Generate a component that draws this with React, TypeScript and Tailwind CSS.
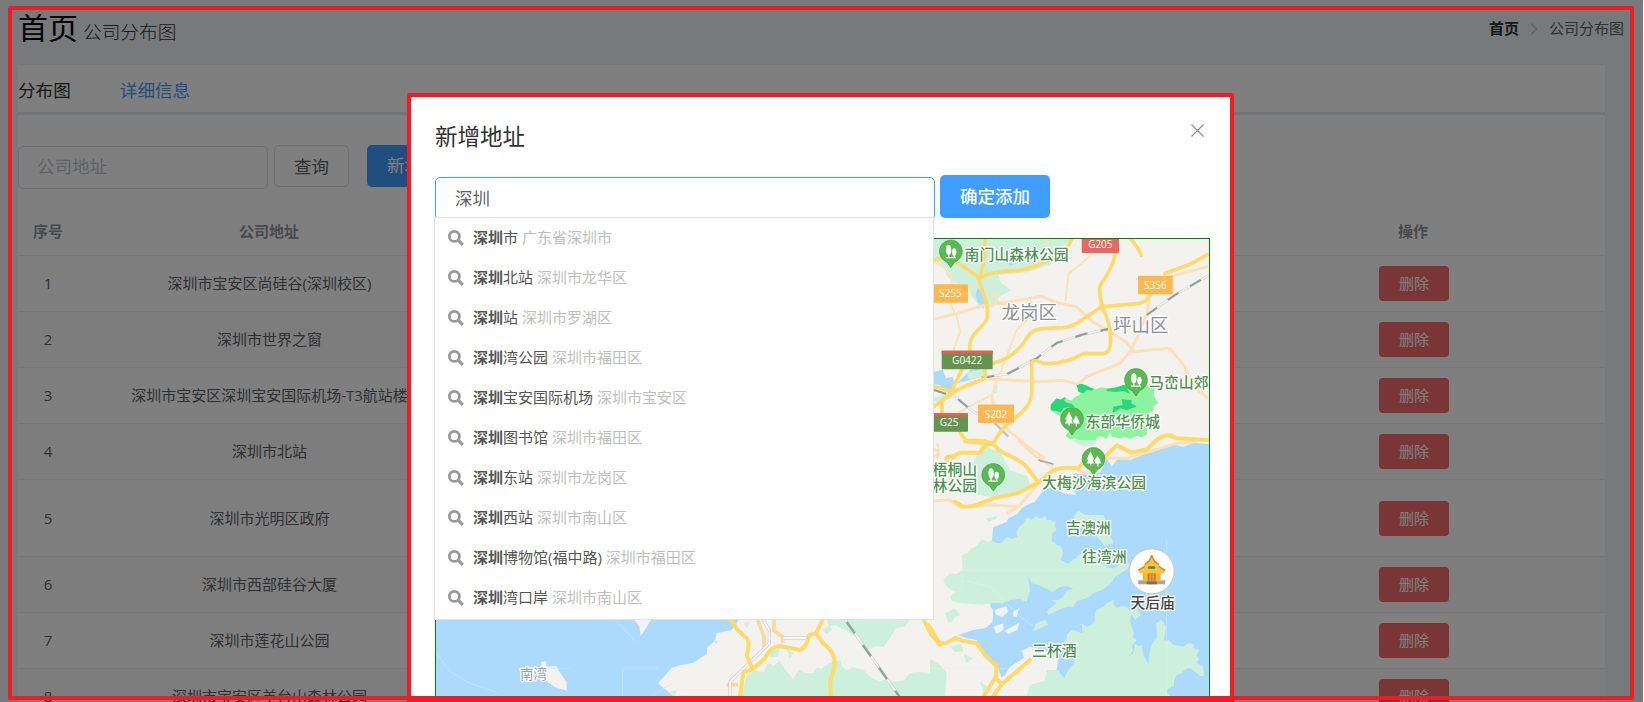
import React from 'react';

const companies = [
  { address: '深圳市宝安区尚硅谷(深圳校区)', tall: false },
  { address: '深圳市世界之窗', tall: false },
  { address: '深圳市宝安区深圳宝安国际机场-T3航站楼', tall: false },
  { address: '深圳市北站', tall: false },
  { address: '深圳市光明区政府', tall: true },
  { address: '深圳市西部硅谷大厦', tall: false },
  { address: '深圳市莲花山公园', tall: false },
  { address: '深圳市宝安区羊台山森林公园', tall: false },
];

const suggestions = [
  ['市', '广东省深圳市'],
  ['北站', '深圳市龙华区'],
  ['站', '深圳市罗湖区'],
  ['湾公园', '深圳市福田区'],
  ['宝安国际机场', '深圳市宝安区'],
  ['图书馆', '深圳市福田区'],
  ['东站', '深圳市龙岗区'],
  ['西站', '深圳市南山区'],
  ['博物馆(福中路)', '深圳市福田区'],
  ['湾口岸', '深圳市南山区'],
];

function SearchIcon() {
  return (
    <svg className="h-4 w-4 shrink-0" viewBox="0 0 16 16" fill="none" stroke="#999">
      <circle cx="6.4" cy="6.4" r="5" strokeWidth="2.8" />
      <path d="M10.2 10.2L14.8 14.8" strokeWidth="3.2" />
    </svg>
  );
}

function Header() {
  return (
    <header className="flex h-[65px] justify-between pl-[18px] pr-[19px]">
      <div className="flex items-baseline gap-[5px] leading-[56px]">
        <h1 className="text-[30px] text-black">首页</h1>
        <span className="text-[18.7px] font-light text-[#303133]">公司分布图</span>
      </div>
      <nav className="flex h-[57px] items-center text-[15px]">
        <span className="font-bold text-[#303133]">首页</span>
        <svg className="mx-[11px] h-3 w-2" viewBox="0 0 8 12" fill="none" stroke="#c0c4cc" strokeWidth="1.2">
          <path d="M1 0.5L6.5 6L1 11.5" />
        </svg>
        <span className="text-[#606266]">公司分布图</span>
      </nav>
    </header>
  );
}

function CompanyTable() {
  return (
    <div className="text-[15px] text-[#606266]">
      <div className="flex h-12 items-center border-b border-[#ebeef5] text-center font-bold text-[#909399]">
        <div className="w-[60px]">序号</div>
        <div className="w-96 pr-[2px]">公司地址</div>
        <div className="flex-1" />
        <div className="w-[382px] pr-[2px]">操作</div>
      </div>
      {companies.map((company, i) => (
        <div
          key={company.address}
          className={
            'flex items-center border-b border-[#ebeef5] text-center ' +
            (company.tall ? 'h-[77px] ' : 'h-14 ') +
            (i % 2 ? 'bg-[#fafafa]' : 'bg-white')
          }
        >
          <div className="w-[60px]">{i + 1}</div>
          <div className="w-96 whitespace-nowrap pr-px">{company.address}</div>
          <div className="flex-1" />
          <div className="flex w-[382px] justify-center">
            <button className="h-[35px] w-[70px] rounded-[4px] bg-[#f56c6c] text-[15px] text-white">删除</button>
          </div>
        </div>
      ))}
    </div>
  );
}

function Page() {
  return (
    <div className="h-full w-[1643px] bg-[#f0f2f5]">
      <Header />
      <main className="ml-[18px] w-[1587px] bg-white">
        <div className="flex h-[50px] items-center gap-[49px] border-b-[3px] border-[#e4e7ed] pt-[3px] text-[17.6px] text-[#303133]">
          <span>分布图</span>
          <span className="text-[#409eff]">详细信息</span>
        </div>
        <div className="flex h-[93px] items-start pt-[30px] text-[17.5px]">
          <div className="mt-px flex h-[43px] w-[250px] items-center rounded-[5px] border border-[#dcdfe6] pb-[2px] pl-[18px] text-[#c0c4cc]">
            公司地址
          </div>
          <button className="ml-[6px] h-[42px] w-[75px] rounded-[5px] border border-[#dcdfe6] text-[#606266]">查询</button>
          <button className="ml-[18px] h-[42px] w-[75px] rounded-[5px] bg-[#409eff] pb-[1px] text-white">新增</button>
        </div>
        <CompanyTable />
      </main>
    </div>
  );
}

function TreePin({ x, y, pointed = false }: { x: number; y: number; pointed?: boolean }) {
  return (
    <g transform={`translate(${x} ${y})`}>
      <path d="M0 15.5L-4 10A11.3 11.3 0 1 1 4 10Z" fill="#5bb954" stroke="#4a9e45" strokeWidth="0.8" />
      {pointed ? (
        <g fill="#fff">
          <path d="M-3-8L-7 0H-5L-7 4H-3.6V6H-2.2V4H1L-0.8 0H0.8Z" />
          <path d="M4-4L1 1L2 4H3.7V7H5V4H8L6.5 1H7Z" />
        </g>
      ) : (
        <g fill="#fff">
          <ellipse cx="-2.2" cy="-2.2" rx="2.7" ry="5" />
          <ellipse cx="3.4" cy="0" rx="2.2" ry="3.8" />
          <path d="M-2.8 0H-1.6V6H-2.8ZM2.8 2H4V6H2.8ZM-5 5H5V6.2H-5Z" />
        </g>
      )}
    </g>
  );
}

function RoadSign({ x, y, w, label, color, top }: { x: number; y: number; w: number; label: string; color: string; top?: boolean }) {
  return (
    <g>
      <rect x={x} y={y} width={w} height="18.5" fill={color} rx="0.8" />
      {top && <rect x={x} y={y} width={w} height="3" fill="#e85c56" />}
      <text x={x + w / 2} y={y + 13} fontSize="10" textAnchor="middle" fill="#fff">{label}</text>
    </g>
  );
}

const greenLabels: [number, number, string][] = [
  [964.5, 259.5, '南门山森林公园'],
  [1149, 387.5, '马峦山郊'],
  [1085.5, 426.5, '东部华侨城'],
  [1042, 488, '大梅沙海滨公园'],
  [932.5, 475, '梧桐山'],
  [932.5, 491, '林公园'],
  [1066, 533, '吉澳洲'],
  [1082, 562, '往湾洲'],
  [1032, 656, '三杯酒'],
];

function MapView() {
  return (
    <svg
      className="block h-[464px] w-[773px]"
      viewBox="436 239 773 464"
      fill="none"
      strokeLinejoin="round"
      fontFamily="'Open Sans', 'Noto Sans CJK SC', sans-serif"
    >
      <rect x="436" y="239" width="773" height="464" fill="#f3f2ee" />

      {/* northern districts */}
      <g transform="translate(930 235) scale(.33333)">
        <path fill="#cdf0dd" d="M12 10H430L408 26L390 40L375 80L350 92L290 112L205 120L212 142L245 166L210 184L190 216L150 216L125 184L112 152L75 145L50 122L42 92L12 82Z" />
        <path fill="#fbe5bb" d="M345 12L360 12L350 50Z" />
        <path fill="#acdafd" d="M238 38L258 58L275 48L292 76L240 92L225 75ZM142 158L158 175L168 200L160 222L145 204L136 184ZM12 410L38 404L48 430L68 425L75 455L45 470L30 450L12 448ZM82 445L120 405L150 400L120 435Z" />
        <path fill="#cdf0dd" d="M110 412L160 402L160 424L120 440ZM190 450L202 448L202 472L193 476ZM12 490L45 475L70 485L40 500L12 498ZM150 645L170 638L210 650L230 700H120Z" />
        <g stroke="#fde0ba" strokeWidth="9">
          <path d="M12 252L80 236L165 210L230 202L335 184L385 204L440 216L485 258L530 285L590 322L610 350L720 340L765 395L780 445L834 490" />
          <path d="M170 180H200L200 202L240 210M170 432L325 440L400 436L445 448L470 425L570 385L600 350L625 300L650 240L660 180M720 125L834 95M185 475L195 540L240 590L300 640L345 670" />
        </g>
        <g stroke="#fbe3b6" strokeWidth="6">
          <path d="M12 80L55 105L70 150L62 210L80 245L90 290L70 347M490 55L415 118L406 200M300 245L260 285L235 350L185 480L85 532M20 625Q35 650 12 665" />
        </g>
        <path stroke="#bcc3c2" strokeWidth="7" d="M120 437L170 425L230 418L320 370L380 324L460 298L535 282M650 240L735 180L834 122M12 465L75 485L130 530L190 560L235 605M330 676L370 690" />
        <path stroke="#f4f4f1" strokeWidth="5" d="M120 437L170 425L230 418L320 370L380 324L460 298L535 282M650 240L735 180L834 122M12 465L75 485L130 530L190 560" />
        <path stroke="#8f9e9b" strokeWidth="6" strokeDasharray="38 40" d="M155 428L230 418L320 370L380 324L460 298L535 282M650 240L735 180L834 122M12 465L75 485L130 530L190 560" />
        <g stroke="#ffd96a" strokeWidth="11" strokeLinecap="round">
          <path d="M12 75Q55 60 85 85L148 128Q166 80 165 12M148 128Q200 104 260 107Q310 100 345 80Q400 70 425 12" />
          <path d="M148 128C145 162 178 190 172 245C168 278 112 290 120 347" />
          <path d="M190 385Q255 368 290 310Q302 282 345 280L400 278Q430 275 460 252L515 215L630 205Q650 200 660 180" />
          <path d="M555 55Q553 90 511 150Q505 170 518 218Q542 265 542 310Q543 356 518 356L460 356Q400 390 340 385Q305 368 305 388L305 480Q300 520 240 560Q205 590 190 628" />
          <path d="M705 115L780 88L834 58M603 12L625 42L634 60M12 455L70 470L165 430L165 405M36 530L35 500L64 470L95 405M12 515L60 478L110 450M90 592L110 620L185 626" />
        </g>
        <path fill="#8cf3a0" d="M362 510L372 500L380 492L392 494L408 486L413 494L425 496L438 484L450 480L452 462L440 452L455 446L470 450L484 458L498 463L514 457L530 460L560 458L585 450L650 450L675 460L671 480L684 505L668 515L672 526L655 535L658 555L650 566L662 575L650 585L652 598L635 607L620 603L600 612L585 606L570 610L545 605L540 592L530 612L515 604L500 608L498 620L490 628L474 626L460 634L448 618L435 610L420 612L406 604L412 594L428 585L420 572L395 560L396 548L378 536L362 528L368 518Z" />
        <path fill="#28d878" d="M362 510L372 498L380 490L392 494L405 486L403 498L412 504L425 506L435 515L418 516L400 520L392 532L378 528L362 525ZM440 450L455 446L475 455L492 462L484 467L472 464L460 475L445 470ZM530 462L560 457L580 450L600 453L610 460L592 463L600 476L580 468L555 471L530 468ZM548 535L550 515L565 512L578 510L575 492L590 494L605 495L604 505L620 515L606 520L590 526L572 520Z" />
      </g>

      {/* coast and islands */}
      <g transform="translate(930 440) scale(.33333)">
        <path fill="#acdafd" d="M834 12L790 8L760 20L720 12L690 28L650 30L630 48L600 60L568 50L545 80L530 55L512 96L490 105L430 100L425 148L440 165L400 160L370 140L340 150L315 185L290 195L275 205L262 222L235 235L230 245L190 262L185 310L200 318L180 500L190 510L187 548L165 565L130 570L85 585L110 595L140 600L165 640L200 670L214 712L225 706L240 680L265 665L300 640L300 622L400 720L700 768H837V10Z" />
        <path fill="#f3f2ee" d="M80 330L200 318L200 480L80 490ZM195 510L228 498L235 515L218 530L198 525ZM250 515L268 505L260 530L250 530ZM190 560L220 550L220 570L200 582ZM225 572L268 548L262 570L235 582ZM275 632L300 620L360 635L385 650L380 690L355 690L325 658L285 660Z" />
        <g fill="#cdf0dd">
          <path d="M40 420L60 400L80 402L98 390L95 345L110 340L125 325L140 318L155 298L175 305L182 300L200 310L215 308L230 292L248 296L262 290L260 275L268 260L282 248L286 236L295 232L305 240L318 228L330 236L345 228L350 240L364 240L378 248L372 256L380 268L366 282L365 305L378 308L380 316L392 318L400 340L392 360L415 372L425 362L440 355L444 345L460 340L472 346L484 340L500 345L506 354L500 360L510 370L525 372L530 382L550 385L572 372L598 370L595 385L555 410L545 428L520 448L490 460L470 475L440 482L430 500L410 500L380 512L355 525L350 515L365 502L380 490L365 480L385 480L400 470L410 454L430 446L410 438L388 442L368 455L325 435L305 430L295 408L300 450L290 485L270 478L240 480L220 490L190 488L160 494L90 490L65 482L62 468L80 455L60 448L45 435Z" />
          <path d="M445 212L465 225L520 225L532 250L545 270L542 284L550 310L538 312L525 320L512 302L500 290L520 270L455 260L430 230ZM345 540L355 555L338 560L325 568L310 572L318 550Z" />
          <path d="M290 768L300 735L345 722L350 690L383 690L402 715L415 690L430 672L440 650L415 650L410 635L390 620L410 596L410 585L425 570L440 574L458 580L455 550L470 560L485 555L496 540L494 522L500 510L520 500L530 490L552 478L550 492L560 505L575 498L590 500L605 520L600 540L605 560L612 580L608 590L620 600L605 620L610 632L595 650L610 640L615 610L625 618L635 615L640 645L655 672L662 620L672 604L682 595L678 550L695 540L708 560L702 602L716 600L730 615L760 620L775 610L790 612L792 624L808 630L800 645L806 658L800 668L820 680L822 708L810 708L800 698L780 683L765 688L755 700L740 705L732 722L732 738L716 745L710 755L720 768Z" />
          <path d="M100 150L130 80L150 30L180 25L215 45L240 90L290 108L300 130L270 155L215 175L145 165ZM0 655L30 675L50 700L45 768H0ZM45 520L60 512L75 505L82 515L90 525L75 530L68 542L55 550ZM60 620L95 612L100 635L75 635ZM100 640L130 655L110 670ZM150 725L175 740L160 755ZM170 235L200 228L198 238L175 245ZM600 515L620 505L632 525L615 540ZM640 490L660 505L650 520ZM425 0H500L490 15L460 20Z" />
        </g>
        <path stroke="#e5f2ea" strokeWidth="2" d="M96 450V390H400M400 390H600M710 300V768M0 685H330M96 420L180 440L270 530L310 560" opacity=".6" />
        <g stroke="#fde0ba" strokeWidth="9">
          <path d="M14 182L60 180L90 202L190 195L265 200L230 220M265 200L325 130M265 0L315 48L370 80M440 90L490 105M530 55L590 55L640 40L690 25L740 10L800 5M12 30Q35 30 20 55" />
        </g>
        <g stroke="#ffd96a" strokeWidth="12" strokeLinecap="round">
          <path d="M70 52Q82 35 110 38H150Q160 15 188 10L208 32L260 58Q290 75 300 95L325 128L360 98Q380 78 445 85L462 65M105 4Q150 -3 188 10M525 50L560 16L605 38L650 28L680 0Q710 -25 740 -5L834 0" />
          <path d="M75 185L98 200L130 198L190 175L260 160L325 128M50 80V52L70 48" />
          <path d="M-4 555L28 610H48L76 594L98 602L140 610L165 645L200 678L198 710L160 770M198 715L216 732L300 660M216 732L188 770" />
        </g>
        <path stroke="#aaa" strokeWidth="4" d="M325 60L370 72" />
      </g>

      {/* bay along the southern edge */}
      <g transform="translate(430 610) scale(.33333)">
        <path fill="#acdafd" d="M18 28H945L905 60L860 70L855 92L832 112L830 132L790 158L750 166L725 174L684 220L730 258L715 280H18Z" />
        <path fill="#f3f2ee" d="M612 28H664L650 52L632 78L628 50ZM333 155L348 154L350 170L380 168L390 188L410 215L410 242L375 232L345 210Z" />
        <path fill="#f3f2ee" d="M928 28H960V60H905Z" />
        <g fill="#cdf0dd">
          <path d="M950 196L975 182L1000 185L1010 165L1020 160L1032 168L1050 150L1062 175L1080 195L1090 208L1100 190L1110 180L1125 190L1150 190L1160 172L1175 176L1190 165L1205 155L1230 150L1235 168L1250 180L1270 172L1300 180L1320 200L1350 215L1370 205L1390 215L1420 212L1440 190L1460 185L1520 190V280H930Z" />
          <path d="M1190 28H1440L1425 50L1395 55L1388 72L1375 90L1362 110L1340 108L1310 120L1270 75L1248 62L1215 45L1195 50ZM1025 120L1050 115L1045 140L1018 142ZM1070 118L1090 128L1080 145ZM940 40L960 35L950 55ZM850 90L865 92L860 104ZM1175 60L1200 48L1205 60L1190 72ZM720 245L740 240L735 265Z" />
        </g>
        <path stroke="#c8e5fa" strokeWidth="2" d="M20 130L60 185L120 220L210 250M555 28L616 94M355 175H418M684 174H578V258M725 220L665 258" />
        <g stroke="#fbd99e" strokeWidth="11">
          <path d="M982 28L1002 80V112M1032 28V62L1058 80V98M890 224H924" />
        </g>
        <path stroke="#c4c4c2" strokeWidth="9" d="M998 28L1018 60V100L900 215V258M1060 84H1138" />
        <path stroke="#f5f5f3" strokeWidth="6" d="M998 28L1018 60V100L900 215V258M1060 84H1138" />
        <g stroke="#ffd96a" strokeWidth="12" strokeLinecap="round">
          <path d="M902 30L925 62L950 84Q962 100 950 135L968 178L940 186L930 262M968 178L1005 145Q1020 110 1050 108L1110 120Q1130 112 1138 75L1158 70L1178 28M1158 70L1180 100Q1220 130 1213 170L1200 215L1203 262M1480 28L1505 75L1530 105" />
        </g>
        <path stroke="#c3cac5" strokeWidth="8" d="M1245 28L1410 262" />
        <path stroke="#fff" strokeWidth="5" d="M1245 28L1410 262" />
        <path stroke="#8fa596" strokeWidth="7" strokeDasharray="42 42" d="M1250 36L1410 262" />
      </g>

      <RoadSign x={1081.7} y={234.5} w={37.3} label="G205" color="#e66864" />
      <RoadSign x={1138} y={275.7} w={34.8} label="S356" color="#ffb84f" />
      <RoadSign x={933} y={284.3} w={35} label="S255" color="#ffb84f" />
      <RoadSign x={941.7} y={350.7} w={51} label="G0422" color="#64954f" top />
      <RoadSign x={930} y={413.3} w={38} label="G25" color="#64954f" top />
      <RoadSign x={978} y={404.6} w={36} label="S202" color="#ffb84f" />

      <TreePin x={950.8} y={252} />
      <TreePin x={1136} y={380.5} />
      <TreePin x={1072} y={419.5} pointed />
      <TreePin x={1093.5} y={459.5} pointed />
      <TreePin x={993.3} y={475.5} />

      <g fontSize="14.9" fontWeight="500" fill="#4f9150" stroke="#fff" strokeWidth="2.5" paintOrder="stroke">
        {greenLabels.map(([x, y, label]) => (
          <text key={label} x={x} y={y}>{label}</text>
        ))}
      </g>
      <g fontSize="18.5" fill="#8b9095" stroke="#fff" strokeWidth="2.5" paintOrder="stroke">
        <text x="1001.5" y="318.5">龙岗区</text>
        <text x="1113" y="331.5">坪山区</text>
      </g>
      <text x="520" y="678.5" fontSize="13.5" fill="#8fa3a6" stroke="#fff" strokeWidth="2.5" paintOrder="stroke">南湾</text>

      {/* temple marker */}
      <g transform="translate(1151.7 571.3)">
        <circle r="22.5" fill="#fff" stroke="#c5c9cc" strokeWidth="1" />
        <path d="M-13.5 9H13.5V13H-13.5Z" fill="#a2a7a2" />
        <path d="M-5 9H5V13H-5Z" fill="#6f7470" />
        <path d="M-9 0H9V10H-9Z" fill="#f5b53d" />
        <path d="M-4 2H4V10H-4Z" fill="#c97c20" />
        <path d="M-2.5 3H-.4V10H-2.5ZM.4 3H2.5V10H.4Z" fill="#e39a35" />
        <path d="M-13.5 -1Q-8 -3 -7 -7Q-2 -9 0 -16Q2 -9 7 -7Q8 -3 13.5 -1L12 2H-12Z" fill="#fac343" />
        <path d="M0 -16Q-2 -9 -7 -7M0 -16Q2 -9 7 -7M-13.5 -1L-7 -5M13.5 -1L7 -5" stroke="#d98a26" strokeWidth="1.5" />
        <path d="M-3.5 -5H3.5V-2.5H-3.5Z" fill="#3f8b62" />
      </g>
      <text x="1130.5" y="607.5" fontSize="14.7" fontWeight="500" fill="#444" stroke="#fff" strokeWidth="2.5" paintOrder="stroke">天后庙</text>
    </svg>
  );
}

function AddressDialog() {
  return (
    <section className="absolute left-[407px] top-[93px] flex h-[609px] w-[827px] flex-col overflow-hidden rounded-t-[2px] border-4 border-b-[6px] border-[#ee1c25] bg-white pl-6 pr-5">
      <div className="flex h-[78px] shrink-0 justify-between pr-[6px]">
        <h2 className="pt-6 text-[22.5px] leading-8 text-[#303133]">新增地址</h2>
        <svg className="mt-[27px] h-[13px] w-[13px]" viewBox="0 0 13 13" fill="none" stroke="#909399" strokeWidth="1.3">
          <path d="M0.5 0.5L12.5 12.5M12.5 0.5L0.5 12.5" />
        </svg>
      </div>
      <div className="flex shrink-0">
        <div className="mt-[2px] flex h-[43px] w-[500px] items-center rounded-[5px] border border-[#409eff] pl-[19px] text-[17.5px] text-[#606266]">
          深圳
        </div>
        <button className="ml-[5px] h-[43px] w-[110px] rounded-[5px] bg-[#409eff] pb-[1px] text-[17.5px] font-medium text-white">确定添加</button>
      </div>
      <div className="mt-[18px] w-[775px] shrink-0 border border-[#008000]">
        <MapView />
      </div>
    </section>
  );
}

function SuggestionList() {
  return (
    <ul className="absolute left-[434px] top-[217px] h-[403px] w-[500px] border border-[#e1e3e5] bg-white text-[15px]">
      {suggestions.map(([name, area]) => (
        <li key={name} className="flex h-10 items-center pb-px pl-[13px]">
          <SearchIcon />
          <span className="ml-[9px] whitespace-nowrap text-[#555]">
            <b>深圳</b>
            {name} <span className="text-[#bebebe]">{area}</span>
          </span>
        </li>
      ))}
    </ul>
  );
}

export default function App() {
  return (
    <div className="relative h-[702px] w-[1644px] overflow-hidden bg-white font-['Open_Sans','Noto_Sans_CJK_SC',sans-serif]">
      <Page />
      <div className="absolute left-0 top-0 h-full w-[1643px] bg-black/50" />
      <div className="absolute left-2 top-[6px] h-[694px] w-[1626px] rounded-[2px] border-4 border-[#ee1c25]" />
      <AddressDialog />
      <SuggestionList />
    </div>
  );
}
